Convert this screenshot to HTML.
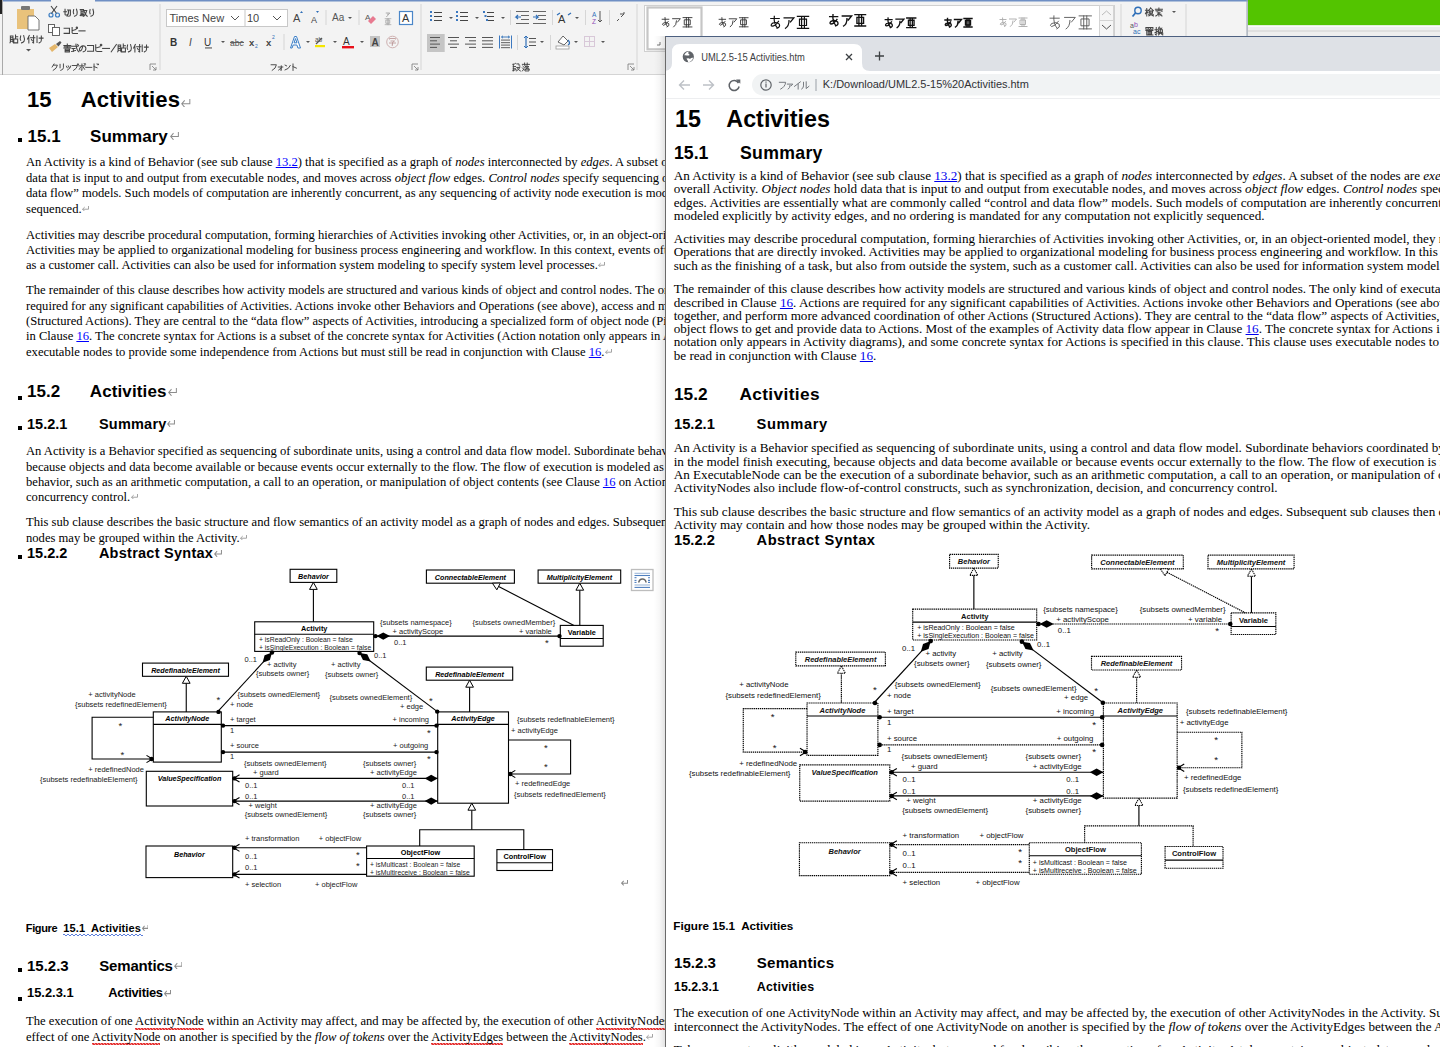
<!DOCTYPE html><html><head><meta charset="utf-8"><style>
.bx{fill:#fff;stroke:#000;stroke-width:1.1}
.ln{stroke:#000;stroke-width:1.1}
.tri{fill:#fff;stroke:#000;stroke-width:1}
.brd .bx,.brd .tri,.dl{stroke-dasharray:1.3 0.7}
.brd text{fill:#111}
.brd text{font-size-adjust:none}
.dt,.dm{fill:#000}
.ar{fill:none;stroke:#000;stroke-width:1.1}
text{font-family:"Liberation Sans",sans-serif}
.t{font-size:7.5px;fill:#222}
.at{font-size:6.8px;fill:#222}
.st{font-size:9.5px;fill:#222}
.nb{font-size:7.3px;font-weight:bold;fill:#000}
.nbi{font-size:7.2px;font-weight:bold;font-style:italic;fill:#000}

*{margin:0;padding:0;box-sizing:border-box}
html,body{width:1440px;height:1047px;overflow:hidden;background:#fff;position:relative}
body{font-family:"Liberation Sans",sans-serif;color:#000}
.a{position:absolute}
.ln{position:absolute;white-space:nowrap;font-family:"Liberation Serif",serif;line-height:1}
.hd{position:absolute;white-space:pre;font-family:"Liberation Sans",sans-serif;font-weight:bold;line-height:1}
.lk{color:#0000ee;text-decoration:underline}
.wlk{color:#0000ff;text-decoration:underline}
.pm{display:inline-block;width:7px;height:5.6px;margin-left:0.3px;vertical-align:1.5px}
.sq{position:absolute;width:4px;height:4px;background:#000}
.sp{padding-bottom:1.5px;background-image:linear-gradient(45deg,transparent 38%,#e53030 38%,#e53030 62%,transparent 62%),linear-gradient(-45deg,transparent 38%,#e53030 38%,#e53030 62%,transparent 62%);background-size:3px 2.2px;background-repeat:repeat-x;background-position:0 100%,1.5px 100%}
.wv{text-decoration:underline wavy #3060e0;text-decoration-thickness:1px;text-underline-offset:2px}
.jp{position:absolute;background:#555;opacity:.55;height:9px}
</style></head><body><div class="a" style="left:0;top:0;width:1440px;height:1047px;background:#fff"></div><div class="a" id="wdoc" style="left:3px;top:74px;width:662px;height:973px;overflow:hidden;background:#fff"><div class="hd" style="left:24.00px;top:14.79px;font-size:22.1px;letter-spacing:0.000px;">15</div><div class="hd" style="left:77.80px;top:14.79px;font-size:22.1px;letter-spacing:0.107px;">Activities</div><svg class="a" style="left:178.00px;top:24.50px" width="9.50" height="8.50" viewBox="0 0 10 8" preserveAspectRatio="none"><path d="M9.3,0 V4.5 H0.8 M3.9,1.2 L0.8,4.5 L3.9,7.8" fill="none" stroke="#8c8c8c" stroke-width="1.05"/></svg><div class="sq" style="left:15px;top:64px"></div><div class="hd" style="left:24.50px;top:53.81px;font-size:17px;letter-spacing:0.000px;">15.1</div><div class="hd" style="left:87.00px;top:53.81px;font-size:17px;letter-spacing:0.047px;">Summary</div><svg class="a" style="left:166.80px;top:58.00px" width="9.00" height="8.00" viewBox="0 0 10 8" preserveAspectRatio="none"><path d="M9.3,0 V4.5 H0.8 M3.9,1.2 L0.8,4.5 L3.9,7.8" fill="none" stroke="#8c8c8c" stroke-width="1.11"/></svg><div class="ln" style="left:23px;top:82.15px;font-size:12.6px;color:#000;">An Activity is a kind of Behavior (see sub clause <span class="wlk">13.2</span>) that is specified as a graph of <i>nodes</i> interconnected by <i>edges</i>. A subset of the nodes are executable nodes</div><div class="ln" style="left:23px;top:97.75px;font-size:12.6px;color:#000;">data that is input to and output from executable nodes, and moves across <i>object flow</i> edges. <i>Control nodes</i> specify sequencing of executable nodes</div><div class="ln" style="left:23px;top:113.35px;font-size:12.6px;color:#000;">data flow” models. Such models of computation are inherently concurrent, as any sequencing of activity node execution is modeled explicitly</div><div class="ln" style="left:23px;top:128.95px;font-size:12.6px;color:#000;">sequenced.<svg class="pm" viewBox="0 0 10 8" preserveAspectRatio="none"><path d="M9.3,0 V4.6 H0.8 M3.9,1.5 L0.8,4.6 L3.9,7.7" fill="none" stroke="#9a9a9a" stroke-width="1.3"/></svg></div><div class="ln" style="left:23px;top:154.65px;font-size:12.6px;color:#000;">Activities may describe procedural computation, forming hierarchies of Activities invoking other Activities, or, in an object-oriented model</div><div class="ln" style="left:23px;top:170.05px;font-size:12.6px;color:#000;">Activities may be applied to organizational modeling for business process engineering and workflow. In this context, events often</div><div class="ln" style="left:23px;top:184.65px;font-size:12.6px;color:#000;">as a customer call. Activities can also be used for information system modeling to specify system level processes.<svg class="pm" viewBox="0 0 10 8" preserveAspectRatio="none"><path d="M9.3,0 V4.6 H0.8 M3.9,1.5 L0.8,4.6 L3.9,7.7" fill="none" stroke="#9a9a9a" stroke-width="1.3"/></svg></div><div class="ln" style="left:23px;top:209.95px;font-size:12.6px;color:#000;">The remainder of this clause describes how activity models are structured and various kinds of object and control nodes. The only kind</div><div class="ln" style="left:23px;top:225.55px;font-size:12.6px;color:#000;">required for any significant capabilities of Activities. Actions invoke other Behaviors and Operations (see above), access and modify</div><div class="ln" style="left:23px;top:240.95px;font-size:12.6px;color:#000;">(Structured Actions). They are central to the “data flow” aspects of Activities, introducing a specialized form of object node (Pins)</div><div class="ln" style="left:23px;top:256.45px;font-size:12.6px;color:#000;">in Clause <span class="wlk">16</span>. The concrete syntax for Actions is a subset of the concrete syntax for Activities (Action notation only appears in Activity</div><div class="ln" style="left:23px;top:271.75px;font-size:12.6px;color:#000;">executable nodes to provide some independence from Actions but must still be read in conjunction with Clause <span class="wlk">16</span>.<svg class="pm" viewBox="0 0 10 8" preserveAspectRatio="none"><path d="M9.3,0 V4.6 H0.8 M3.9,1.5 L0.8,4.6 L3.9,7.7" fill="none" stroke="#9a9a9a" stroke-width="1.3"/></svg></div><div class="ln" style="left:23px;top:370.75px;font-size:12.6px;color:#000;">An Activity is a Behavior specified as sequencing of subordinate units, using a control and data flow model. Subordinate behaviors coordinated</div><div class="ln" style="left:23px;top:386.55px;font-size:12.6px;color:#000;">because objects and data become available or because events occur externally to the flow. The flow of execution is modeled as ActivityEdges</div><div class="ln" style="left:23px;top:401.75px;font-size:12.6px;color:#000;">behavior, such as an arithmetic computation, a call to an operation, or manipulation of object contents (see Clause <span class="wlk">16</span> on Actions)</div><div class="ln" style="left:23px;top:416.95px;font-size:12.6px;color:#000;">concurrency control.<svg class="pm" viewBox="0 0 10 8" preserveAspectRatio="none"><path d="M9.3,0 V4.6 H0.8 M3.9,1.5 L0.8,4.6 L3.9,7.7" fill="none" stroke="#9a9a9a" stroke-width="1.3"/></svg></div><div class="ln" style="left:23px;top:442.35px;font-size:12.6px;color:#000;">This sub clause describes the basic structure and flow semantics of an activity model as a graph of nodes and edges. Subsequent sub clauses</div><div class="ln" style="left:23px;top:457.85px;font-size:12.6px;color:#000;">nodes may be grouped within the Activity.<svg class="pm" viewBox="0 0 10 8" preserveAspectRatio="none"><path d="M9.3,0 V4.6 H0.8 M3.9,1.5 L0.8,4.6 L3.9,7.7" fill="none" stroke="#9a9a9a" stroke-width="1.3"/></svg></div><div class="ln" style="left:23px;top:941.35px;font-size:12.6px;color:#000;">The execution of one <span class="sp">ActivityNode</span> within an Activity may affect, and may be affected by, the execution of other <span class="sp">ActivityNodes</span> in</div><div class="ln" style="left:23px;top:957.15px;font-size:12.6px;color:#000;">effect of one <span class="sp">ActivityNode</span> on another is specified by the <i>flow of tokens</i> over the <span class="sp">ActivityEdges</span> between the <span class="sp">ActivityNodes</span>.<svg class="pm" viewBox="0 0 10 8" preserveAspectRatio="none"><path d="M9.3,0 V4.6 H0.8 M3.9,1.5 L0.8,4.6 L3.9,7.7" fill="none" stroke="#9a9a9a" stroke-width="1.3"/></svg></div><div class="sq" style="left:15px;top:321.5px"></div><div class="hd" style="left:24.00px;top:309.21px;font-size:17px;letter-spacing:0.000px;">15.2</div><div class="hd" style="left:86.80px;top:309.21px;font-size:17px;letter-spacing:0.115px;">Activities</div><svg class="a" style="left:164.50px;top:313.50px" width="9.00" height="8.00" viewBox="0 0 10 8" preserveAspectRatio="none"><path d="M9.3,0 V4.5 H0.8 M3.9,1.2 L0.8,4.5 L3.9,7.8" fill="none" stroke="#8c8c8c" stroke-width="1.11"/></svg><div class="sq" style="left:15px;top:352px"></div><div class="hd" style="left:24.00px;top:342.73px;font-size:14.5px;letter-spacing:0.000px;">15.2.1</div><div class="hd" style="left:95.90px;top:342.73px;font-size:14.5px;letter-spacing:0.230px;">Summary</div><svg class="a" style="left:164.00px;top:346.00px" width="8.00" height="7.00" viewBox="0 0 10 8" preserveAspectRatio="none"><path d="M9.3,0 V4.5 H0.8 M3.9,1.2 L0.8,4.5 L3.9,7.8" fill="none" stroke="#8c8c8c" stroke-width="1.25"/></svg><div class="sq" style="left:15px;top:480.5px"></div><div class="hd" style="left:24.00px;top:472.43px;font-size:14.5px;letter-spacing:0.000px;">15.2.2</div><div class="hd" style="left:95.90px;top:472.43px;font-size:14.5px;letter-spacing:0.256px;">Abstract Syntax</div><svg class="a" style="left:210.50px;top:475.50px" width="8.00" height="7.00" viewBox="0 0 10 8" preserveAspectRatio="none"><path d="M9.3,0 V4.5 H0.8 M3.9,1.2 L0.8,4.5 L3.9,7.8" fill="none" stroke="#8c8c8c" stroke-width="1.25"/></svg><div class="hd" style="left:22.80px;top:848.69px;font-size:11px;letter-spacing:-0.381px;">Figure</div><div class="hd" style="left:60.30px;top:848.69px;font-size:11px;letter-spacing:0.099px;">15.1  Activities</div><svg class="a" style="left:138.50px;top:851.00px" width="6.50" height="6.00" viewBox="0 0 10 8" preserveAspectRatio="none"><path d="M9.3,0 V4.5 H0.8 M3.9,1.2 L0.8,4.5 L3.9,7.8" fill="none" stroke="#8c8c8c" stroke-width="1.54"/></svg><svg class="a" style="left:60px;top:859px" width="80" height="4"><path d="M0,2 q1,-2 2,0 t2,0 t2,0 t2,0 t2,0 t2,0 t2,0 t2,0 t2,0 t2,0 t2,0 t2,0 t2,0 t2,0 t2,0 t2,0 t2,0 t2,0 t2,0 t2,0 t2,0 t2,0 t2,0 t2,0 t2,0 t2,0 t2,0 t2,0 t2,0 t2,0 t2,0 t2,0 t2,0 t2,0 t2,0 t2,0 t2,0 t2,0 t2,0 t2,0" fill="none" stroke="#4a6fd8" stroke-width="0.9"/></svg><div class="sq" style="left:15px;top:894px"></div><div class="hd" style="left:24.00px;top:884.10px;font-size:15px;letter-spacing:0.000px;">15.2.3</div><div class="hd" style="left:96.20px;top:884.10px;font-size:15px;letter-spacing:-0.159px;">Semantics</div><svg class="a" style="left:170.80px;top:887.50px" width="8.50" height="7.50" viewBox="0 0 10 8" preserveAspectRatio="none"><path d="M9.3,0 V4.5 H0.8 M3.9,1.2 L0.8,4.5 L3.9,7.8" fill="none" stroke="#8c8c8c" stroke-width="1.18"/></svg><div class="sq" style="left:15px;top:922.5px"></div><div class="hd" style="left:24.00px;top:912.58px;font-size:12.9px;letter-spacing:0.000px;">15.2.3.1</div><div class="hd" style="left:105.30px;top:912.58px;font-size:12.9px;letter-spacing:-0.293px;">Activities</div><svg class="a" style="left:160.50px;top:916.00px" width="7.00" height="6.50" viewBox="0 0 10 8" preserveAspectRatio="none"><path d="M9.3,0 V4.5 H0.8 M3.9,1.2 L0.8,4.5 L3.9,7.8" fill="none" stroke="#8c8c8c" stroke-width="1.43"/></svg><svg class="a" style="left:-3px;top:-74px" width="1440" height="1047"><rect class="bx" x="290.1" y="569.3" width="46.70" height="13.10"/><text class="nbi" x="313.45" y="578.90" text-anchor="middle">Behavior</text><rect class="bx" x="426.4" y="570" width="88.00" height="13.20"/><text class="nbi" x="470.40" y="579.60" text-anchor="middle">ConnectableElement</text><rect class="bx" x="538.1" y="570" width="82.60" height="13.20"/><text class="nbi" x="579.40" y="579.60" text-anchor="middle">MultiplicityElement</text><rect class="bx" x="254.7" y="621.8" width="119.00" height="29.60"/><line class="ln" x1="254.7" y1="634.3" x2="373.7" y2="634.3"/><text class="nb" x="314.20" y="631.05" text-anchor="middle">Activity</text><text class="at" x="259" y="642.0">+ isReadOnly : Boolean = false</text><text class="at" x="259" y="650.0">+ isSingleExecution : Boolean = false</text><rect class="bx" x="560.3" y="625.4" width="42.90" height="20.80"/><line class="ln" x1="560.3" y1="638.5" x2="603.2" y2="638.5"/><text class="nb" x="581.75" y="634.95" text-anchor="middle">Variable</text><rect class="bx" x="142.5" y="663.1" width="86.00" height="13.20"/><text class="nbi" x="185.50" y="672.70" text-anchor="middle">RedefinableElement</text><rect class="bx" x="426.3" y="667.1" width="86.40" height="13.10"/><text class="nbi" x="469.50" y="676.70" text-anchor="middle">RedefinableElement</text><rect class="bx" x="153.3" y="711.9" width="68.00" height="50.20"/><line class="ln" x1="153.3" y1="724.4" x2="221.3" y2="724.4"/><text class="nbi" x="187.30" y="721.15" text-anchor="middle">ActivityNode</text><rect class="bx" x="437.7" y="711.9" width="70.80" height="91.30"/><line class="ln" x1="437.7" y1="724.4" x2="508.5" y2="724.4"/><text class="nbi" x="473.10" y="721.15" text-anchor="middle">ActivityEdge</text><rect class="bx" x="146.3" y="771.3" width="86.40" height="34.70"/><text class="nbi" x="189.50" y="781.20" text-anchor="middle">ValueSpecification</text><rect class="bx" x="146" y="846" width="86.70" height="31.60"/><text class="nbi" x="189.35" y="856.80" text-anchor="middle">Behavior</text><rect class="bx" x="366.6" y="846" width="107.60" height="30.20"/><line class="ln" x1="366.6" y1="858.5" x2="474.2" y2="858.5"/><text class="nb" x="420.40" y="855.25" text-anchor="middle">ObjectFlow</text><text class="at" x="370" y="867.2">+ isMulticast : Boolean = false</text><text class="at" x="370" y="875.2">+ isMultireceive : Boolean = false</text><rect class="bx" x="496.9" y="849.6" width="55.60" height="20.90"/><line class="ln" x1="496.9" y1="862.7" x2="552.5" y2="862.7"/><text class="nb" x="524.70" y="859.15" text-anchor="middle">ControlFlow</text><line class="ln" x1="313.40" y1="589.40" x2="313.40" y2="621.80"/><polygon class="tri" points="313.40,582.40 309.55,589.40 317.25,589.40"/><line class="ln" x1="498.62" y1="586.42" x2="574.00" y2="625.40"/><polygon class="tri" points="492.40,583.20 496.85,589.84 500.39,583.00"/><line class="ln" x1="579.80" y1="590.20" x2="579.80" y2="625.40"/><polygon class="tri" points="579.80,583.20 575.95,590.20 583.65,590.20"/><line class="ln" x1="186.25" y1="683.30" x2="186.25" y2="711.90"/><polygon class="tri" points="186.25,676.30 182.40,683.30 190.10,683.30"/><line class="ln" x1="469.60" y1="687.20" x2="469.60" y2="711.90"/><polygon class="tri" points="469.60,680.20 465.75,687.20 473.45,687.20"/><line class="ln" x1="471.80" y1="810.20" x2="471.80" y2="829.80"/><polygon class="tri" points="471.80,803.20 467.95,810.20 475.65,810.20"/><polyline class="ar" points="419.7,846 419.7,829.8 523.8,829.8 523.8,849.6"/><line class="ln" x1="375.50" y1="636.10" x2="560.30" y2="636.10"/><polygon class="dm" points="376.50,636.10 383.25,639.70 390.00,636.10 383.25,632.50"/><circle cx="375.50" cy="636.10" r="2.2" class="dt"/><circle cx="559.50" cy="636.10" r="2.2" class="dt"/><line class="ln" x1="272.00" y1="652.50" x2="217.50" y2="711.90"/><polygon class="dm" points="272.00,652.50 264.61,655.22 262.54,662.82 269.92,660.09"/><circle cx="272.00" cy="652.50" r="2.2" class="dt"/><circle cx="218.50" cy="711.90" r="2.2" class="dt"/><line class="ln" x1="359.50" y1="653.00" x2="437.70" y2="711.90"/><polygon class="dm" points="359.50,653.00 362.93,660.09 370.68,661.42 367.26,654.34"/><circle cx="359.50" cy="653.00" r="2.2" class="dt"/><circle cx="437.20" cy="711.60" r="2.2" class="dt"/><line class="ln" x1="221.30" y1="725.60" x2="437.70" y2="725.60"/><circle cx="223.00" cy="725.60" r="2.2" class="dt"/><circle cx="436.50" cy="725.60" r="2.2" class="dt"/><line class="ln" x1="221.30" y1="752.10" x2="437.70" y2="752.10"/><circle cx="223.00" cy="752.10" r="2.2" class="dt"/><circle cx="436.50" cy="752.10" r="2.2" class="dt"/><line class="ln" x1="232.70" y1="778.40" x2="437.70" y2="778.40"/><polyline class="ar" points="239.50,782.00 233.50,778.40 239.50,774.80"/><circle cx="234.50" cy="778.40" r="2.2" class="dt"/><polygon class="dm" points="437.70,778.40 431.20,774.80 424.70,778.40 431.20,782.00"/><line class="ln" x1="232.70" y1="801.10" x2="437.70" y2="801.10"/><polyline class="ar" points="239.50,804.70 233.50,801.10 239.50,797.50"/><circle cx="234.50" cy="801.10" r="2.2" class="dt"/><polygon class="dm" points="437.70,801.10 431.20,797.50 424.70,801.10 431.20,804.70"/><line class="ln" x1="232.70" y1="847.80" x2="366.60" y2="847.80"/><polyline class="ar" points="239.50,851.40 233.50,847.80 239.50,844.20"/><circle cx="234.50" cy="847.80" r="2.2" class="dt"/><line class="ln" x1="232.70" y1="874.40" x2="366.60" y2="874.40"/><polyline class="ar" points="239.50,878.00 233.50,874.40 239.50,870.80"/><circle cx="234.50" cy="874.40" r="2.2" class="dt"/><polyline class="ar" points="153.3,717.3 92.1,717.3 92.1,759 153.3,759"/><polyline class="ar" points="146.50,755.40 152.50,759.00 146.50,762.60"/><circle cx="151.50" cy="759.00" r="2.2" class="dt"/><polyline class="ar" points="508.5,740 570.6,740 570.6,774 508.5,774"/><polyline class="ar" points="515.30,777.60 509.30,774.00 515.30,770.40"/><circle cx="510.30" cy="774.00" r="2.2" class="dt"/><text class="t" x="380" y="625">{subsets namespace}</text><text class="t" x="392.5" y="634">+ activityScope</text><text class="t" x="394" y="645">0..1</text><text class="t" x="472.6" y="625">{subsets ownedMember}</text><text class="t" x="519" y="634">+ variable</text><text class="st" x="545.0" y="645.5">*</text><text class="t" x="244.5" y="662">0..1</text><text class="t" x="267" y="667">+ activity</text><text class="t" x="256" y="676">{subsets owner}</text><text class="t" x="374" y="658">0..1</text><text class="t" x="331" y="667">+ activity</text><text class="t" x="325" y="677">{subsets owner}</text><text class="t" x="88.3" y="697">+ activityNode</text><text class="t" x="75" y="707">{subsets redefinedElement}</text><text class="st" x="216.5" y="702.5">*</text><text class="t" x="237.5" y="697">{subsets ownedElement}</text><text class="t" x="230" y="707">+ node</text><text class="t" x="329.6" y="700">{subsets ownedElement}</text><text class="st" x="429.0" y="703.5">*</text><text class="t" x="400" y="709">+ edge</text><text class="t" x="230" y="722">+ target</text><text class="t" x="230" y="733">1</text><text class="t" x="392.5" y="722">+ incoming</text><text class="st" x="427.0" y="735.5">*</text><text class="t" x="517" y="722">{subsets redefinableElement}</text><text class="t" x="511" y="733">+ activityEdge</text><text class="st" x="118.5" y="728.5">*</text><text class="st" x="120.5" y="757.5">*</text><text class="t" x="230" y="748">+ source</text><text class="t" x="230" y="759">1</text><text class="t" x="393" y="748">+ outgoing</text><text class="st" x="427.0" y="761.5">*</text><text class="st" x="544.0" y="750.5">*</text><text class="st" x="544.0" y="769.5">*</text><text class="t" x="244" y="766">{subsets ownedElement}</text><text class="t" x="253" y="775">+ guard</text><text class="t" x="363" y="766">{subsets owner}</text><text class="t" x="370" y="775">+ activityEdge</text><text class="t" x="88.3" y="772">+ redefinedNode</text><text class="t" x="40" y="782">{subsets redefinableElement}</text><text class="t" x="245" y="788">0..1</text><text class="t" x="402" y="788">0..1</text><text class="t" x="245" y="799">0..1</text><text class="t" x="402" y="799">0..1</text><text class="t" x="515" y="786">+ redefinedEdge</text><text class="t" x="514" y="797">{subsets redefinedElement}</text><text class="t" x="248.6" y="808">+ weight</text><text class="t" x="370" y="808">+ activityEdge</text><text class="t" x="244.7" y="817">{subsets ownedElement}</text><text class="t" x="363" y="817">{subsets owner}</text><text class="t" x="245" y="841">+ transformation</text><text class="t" x="318.8" y="841">+ objectFlow</text><text class="t" x="245" y="859">0..1</text><text class="st" x="356.0" y="857.5">*</text><text class="t" x="245" y="870">0..1</text><text class="st" x="356.0" y="868.5">*</text><text class="t" x="245" y="887">+ selection</text><text class="t" x="315" y="887">+ objectFlow</text></svg><svg class="a" style="left:-3px;top:-74px" width="700" height="1047"><rect x="631.5" y="569.5" width="21.5" height="21" fill="#fff" stroke="#bdbdbd" stroke-width="1.3"/><g stroke="#4f7fbf" stroke-width="1.1"><line x1="634.5" y1="573.3" x2="650" y2="573.3" stroke="#9fb8d8"/><line x1="634.5" y1="575.5" x2="650" y2="575.5"/><line x1="634.5" y1="577.7" x2="636.5" y2="577.7"/><line x1="648" y1="577.7" x2="650" y2="577.7"/><line x1="634.5" y1="580.4" x2="636.5" y2="580.4"/><line x1="648" y1="580.4" x2="650" y2="580.4"/><line x1="634.5" y1="582.4" x2="636.5" y2="582.4"/><line x1="648" y1="582.4" x2="650" y2="582.4"/><line x1="634.5" y1="585" x2="650" y2="585" stroke="#9fb8d8"/><line x1="634.5" y1="587.4" x2="650" y2="587.4"/></g><path d="M638.8,582.6 a3.6,3.6 0 0 1 7.2,0" fill="none" stroke="#666" stroke-width="1.6"/></svg><svg class="a" style="left:617.50px;top:806.00px" width="7.00" height="5.60" viewBox="0 0 10 8" preserveAspectRatio="none"><path d="M9.3,0 V4.5 H0.8 M3.9,1.2 L0.8,4.5 L3.9,7.8" fill="none" stroke="#8c8c8c" stroke-width="1.43"/></svg></div><svg class="a" style="left:0;top:0" width="1440" height="75"><rect x="0" y="0" width="1248" height="74" fill="#f3f3f3"/><rect x="0" y="74" width="1248" height="1" fill="#d4d4d4"/><rect x="3" y="0" width="48" height="1.5" fill="#6f8fc4"/><rect x="95" y="0" width="1153" height="1.5" fill="#6f8fc4"/><rect x="0" y="0" width="2" height="14" fill="#222"/><rect x="2" y="0" width="1" height="1047" fill="#a9a9a9"/><rect x="1246.5" y="0" width="1.2" height="36" fill="#9aa4b0"/><rect x="159.5" y="4" width="1" height="66" fill="#d6d6d6"/><rect x="420.5" y="4" width="1" height="66" fill="#d6d6d6"/><rect x="636.5" y="4" width="1" height="66" fill="#d6d6d6"/><rect x="1185.5" y="4" width="1" height="66" fill="#d6d6d6"/><rect x="17" y="9" width="17" height="20" fill="#e9c27b"/><rect x="21" y="6" width="9" height="4" rx="1" fill="#777"/><path d="M28,16 h7 l4,4 v10 h-11 z" fill="#fff" stroke="#666" stroke-width="0.9"/><g fill="none" stroke="#444" stroke-width="1.22" stroke-linecap="square" stroke-linejoin="miter"><path transform="translate(9.50,34.70) scale(0.860)" d="M1,1.5 H4 V7.5 H1 Z M1,3.5 H4 M1,5.5 H4 M1.5,7.5 L0.5,9.5 M3.5,7.5 L4.5,9.5 M7,0.5 V5 M7,2.5 H9.5 M5,5 H9.5 V9.5 H5 Z"/><path transform="translate(18.10,34.70) scale(0.860)" d="M3,1.5 Q2,5 3,6.5 M6.5,1 Q8,5 7,7.5 Q6,9 4,9.5"/><path transform="translate(26.70,34.70) scale(0.860)" d="M3,1 L1,5 M2.5,3.5 V9.5 M4.5,3.5 H9.5 M8,1 V9.5 L7,9 M5.5,5.5 L6.5,7"/><path transform="translate(35.30,34.70) scale(0.860)" d="M2,1.5 V9 M4.5,4 H9 M7,1.5 V6.5 Q7,9 4.5,9.5"/></g><path d="M26,49 h5 l-2.5,2.5z" fill="#555"/><g stroke="#444" stroke-width="1.1" fill="none"><line x1="51" y1="6" x2="57" y2="14"/><line x1="57" y1="6" x2="51" y2="14"/></g><g stroke="#3d7ec2" stroke-width="1.2" fill="none"><circle cx="51" cy="15" r="2"/><circle cx="57.5" cy="15" r="2"/></g><g fill="none" stroke="#444" stroke-width="1.34" stroke-linecap="square" stroke-linejoin="miter"><path transform="translate(63.00,8.40) scale(0.820)" d="M1,4 H4.5 M2.5,1 V7 Q2.5,8.5 4.5,8 M5.5,2 H9 V8 Q9,9.5 7,9.5 M7,2 Q7,7 5,9.5"/><path transform="translate(71.20,8.40) scale(0.820)" d="M3,1.5 Q2,5 3,6.5 M6.5,1 Q8,5 7,7.5 Q6,9 4,9.5"/><path transform="translate(79.40,8.40) scale(0.820)" d="M1,1.5 H5 M2,1.5 V9 M4.5,1.5 V9.5 M2,4 H4.5 M2,6.5 H4.5 M1,8.5 L5,7.5 M5.5,2.5 H9 Q8,7 5.5,9.5 M6,4 Q7,8 9.5,9.5"/><path transform="translate(87.60,8.40) scale(0.820)" d="M3,1.5 Q2,5 3,6.5 M6.5,1 Q8,5 7,7.5 Q6,9 4,9.5"/></g><g stroke="#555" stroke-width="0.9" fill="#fff"><rect x="48.5" y="24.5" width="6" height="8"/><rect x="52.5" y="27.5" width="7" height="8"/></g><g fill="none" stroke="#444" stroke-width="1.45" stroke-linecap="square" stroke-linejoin="miter"><path transform="translate(63.00,26.70) scale(0.760)" d="M1.5,2 H8.5 V8.8 H1.5"/><path transform="translate(70.60,26.70) scale(0.760)" d="M2,1.2 V8 Q2,9 4,9 H9 M2,5.2 L7,3.6 M8.2,0.6 a0.9,0.9 0 1 0 0.01,0"/><path transform="translate(78.20,26.70) scale(0.760)" d="M1,5.5 H9"/></g><path d="M49,48 l6,-4 l3,3 l-6,5 z" fill="#e4b66a"/><path d="M56,44 l4,-3 l1.5,1.5 l-3,4z" fill="#555"/><g fill="none" stroke="#444" stroke-width="1.22" stroke-linecap="square" stroke-linejoin="miter"><path transform="translate(63.00,43.70) scale(0.860)" d="M1,2 H9 M1.5,3.5 H8.5 M1,5 H9 M5,0.5 V5 M2.5,6.5 H7.5 V9.5 H2.5 Z M2.5,8 H7.5"/><path transform="translate(70.75,43.70) scale(0.860)" d="M1,3 H8.5 M1.5,5.5 H5 M3,5.5 V9 M1,9 L5.5,8 M6,0.5 Q6.5,7 9.5,9.5 M8,1 L9,2"/><path transform="translate(78.50,43.70) scale(0.860)" d="M5,2.5 Q4,8 2,8.5 Q0.5,8 1.5,5 Q4,1.5 7.5,3 Q9.5,5 8,8 Q7,9 5.5,9.5"/><path transform="translate(86.25,43.70) scale(0.860)" d="M1.5,2 H8.5 V8.8 H1.5"/><path transform="translate(94.00,43.70) scale(0.860)" d="M2,1.2 V8 Q2,9 4,9 H9 M2,5.2 L7,3.6 M8.2,0.6 a0.9,0.9 0 1 0 0.01,0"/><path transform="translate(101.75,43.70) scale(0.860)" d="M1,5.5 H9"/><path transform="translate(109.50,43.70) scale(0.860)" d="M8,1 L2,9.5"/><path transform="translate(117.25,43.70) scale(0.860)" d="M1,1.5 H4 V7.5 H1 Z M1,3.5 H4 M1,5.5 H4 M1.5,7.5 L0.5,9.5 M3.5,7.5 L4.5,9.5 M7,0.5 V5 M7,2.5 H9.5 M5,5 H9.5 V9.5 H5 Z"/><path transform="translate(125.00,43.70) scale(0.860)" d="M3,1.5 Q2,5 3,6.5 M6.5,1 Q8,5 7,7.5 Q6,9 4,9.5"/><path transform="translate(132.75,43.70) scale(0.860)" d="M3,1 L1,5 M2.5,3.5 V9.5 M4.5,3.5 H9.5 M8,1 V9.5 L7,9 M5.5,5.5 L6.5,7"/><path transform="translate(140.50,43.70) scale(0.860)" d="M2,1.5 V9 M4.5,4 H9 M7,1.5 V6.5 Q7,9 4.5,9.5"/></g><g fill="none" stroke="#444" stroke-width="1.27" stroke-linecap="square" stroke-linejoin="miter"><path transform="translate(51.00,63.25) scale(0.750)" d="M4,1 L1.5,5 M3.5,2.5 H8.5 Q8,7 3,9.5"/><path transform="translate(57.80,63.25) scale(0.750)" d="M3,1.5 V6 M7.5,1 V6 Q7.5,8.5 4,9.5"/><path transform="translate(64.60,63.25) scale(0.750)" d="M2.5,4 L3.5,6 M5,3.5 L6,5.5 M8.5,3.5 Q8,7 4,9"/><path transform="translate(71.40,63.25) scale(0.750)" d="M1.5,3 H8 Q7.5,7 3,9.5 M8.7,1 a0.9,0.9 0 1 0 0.01,0"/><path transform="translate(78.20,63.25) scale(0.750)" d="M1,3.5 H9 M5,1 V9.5 L4,9 M3,5.5 L1.5,8 M7,5.5 L8.5,8 M8,0.5 L8.5,1.5 M9.2,0.3 L9.7,1.3"/><path transform="translate(85.00,63.25) scale(0.750)" d="M1,5.5 H9"/><path transform="translate(91.80,63.25) scale(0.750)" d="M3,1 V9.5 M3,4.5 L7,6 M7,1 L7.5,2 M8.5,0.8 L9,1.8"/></g><g stroke="#777" stroke-width="0.8" fill="none"><path d="M150,70 v-6 h6"/><path d="M152,66 l4,4 m0,-3 v3 h-3"/></g><rect x="166.5" y="9.5" width="121" height="17" fill="#fff" stroke="#c8c8c8"/><rect x="244.5" y="9.5" width="1" height="17" fill="#c8c8c8"/><text x="169.5" y="22" font-size="11" fill="#444" font-family="Liberation Sans">Times New I</text><rect x="226" y="10" width="8" height="16" fill="#fff"/><text x="247" y="22" font-size="11" fill="#444" font-family="Liberation Sans">10</text><path d="M231,16 l4,4 l4,-4" stroke="#555" stroke-width="1" fill="none"/><path d="M273,16 l4,4 l4,-4" stroke="#555" stroke-width="1" fill="none"/><text x="293" y="22" font-size="11" fill="#444" font-family="Liberation Sans">A</text><path d="M300,13 l1.5,-2 l1.5,2z" fill="#2f6fb8"/><text x="311" y="23" font-size="9" fill="#444" font-family="Liberation Sans">A</text><path d="M316,11 l1.5,2 l1.5,-2z" fill="#2f6fb8"/><rect x="325.5" y="10" width="1" height="15" fill="#d6d6d6"/><text x="332" y="21" font-size="10" fill="#555" font-family="Liberation Sans">Aa</text><path d="M348,17 h4 l-2,2z" fill="#555"/><rect x="358.5" y="10" width="1" height="15" fill="#d6d6d6"/><text x="365" y="20" font-size="8" fill="#555" font-family="Liberation Sans">A</text><path d="M368,21 l5,-5 l3,3 l-5,5z" fill="#e87a90"/><g fill="none" stroke="#999" stroke-width="1.60" stroke-linecap="square" stroke-linejoin="miter"><path transform="translate(385.50,12.00) scale(0.500)" d="M1.5,2 H8.5 L6,5 M5,4 Q5,8 2.5,9.5"/></g><g fill="none" stroke="#aaa" stroke-width="1.14" stroke-linecap="square" stroke-linejoin="miter"><path transform="translate(384.50,18.00) scale(0.700)" d="M1,1 H9 M1,9.5 H9 M2.5,3 H7.5 V7.5 H2.5 Z M4,1 V9.5 M6,1 V9.5"/></g><rect x="399.5" y="11.5" width="13" height="13" fill="#fff" stroke="#4a86c8" stroke-width="1.2"/><text x="402" y="22" font-size="11" fill="#333" font-family="Liberation Sans">A</text><text x="170" y="46" font-size="10" font-weight="bold" fill="#333" font-family="Liberation Sans">B</text><text x="189" y="46" font-size="10" font-style="italic" fill="#444" font-family="Liberation Serif">I</text><text x="204" y="46" font-size="10" fill="#333" font-family="Liberation Sans">U</text><rect x="205" y="47.5" width="7" height="0.9" fill="#333"/><path d="M221,41 h4 l-2,2z" fill="#555"/><text x="230" y="46" font-size="8.5" fill="#555" font-family="Liberation Sans">abc</text><rect x="230" y="42" width="14" height="0.9" fill="#555"/><text x="249" y="46" font-size="9.5" font-weight="bold" fill="#444" font-family="Liberation Sans">x</text><text x="255" y="48" font-size="5" fill="#2f6fb8" font-family="Liberation Sans">2</text><text x="266" y="46" font-size="9.5" font-weight="bold" fill="#444" font-family="Liberation Sans">x</text><text x="272" y="39" font-size="5" fill="#2f6fb8" font-family="Liberation Sans">2</text><rect x="283.5" y="34" width="1" height="16" fill="#d6d6d6"/><path d="M290.5,48 L294.5,36.5 h2 L300.5,48 h-2.6 l-1,-3 h-3.8 l-1,3 z M294,42.8 h3 l-1.5,-4.2 z" fill="#fff" stroke="#3b7fc8" stroke-width="1" stroke-linejoin="round"/><path d="M306,41 h4 l-2,2z" fill="#555"/><text x="315" y="42" font-size="6.5" fill="#555" font-family="Liberation Sans">ab</text><path d="M316,44 l6,-6" stroke="#555" stroke-width="1.3"/><rect x="315" y="45" width="10" height="2.2" fill="#f4e600"/><path d="M333,41 h4 l-2,2z" fill="#555"/><text x="343" y="45" font-size="10" fill="#333" font-family="Liberation Sans">A</text><rect x="342" y="46" width="12" height="2.4" fill="#e8101a"/><path d="M360,41 h4 l-2,2z" fill="#555"/><rect x="370" y="36" width="10" height="11" fill="#c4c4c4"/><text x="371.5" y="46" font-size="10" font-weight="bold" fill="#444" font-family="Liberation Sans">A</text><circle cx="392.5" cy="42" r="5.8" fill="none" stroke="#c9a9a9" stroke-width="0.9"/><path d="M389.5,39.5 v-1 h6 v1 M390.5,41 h4 l-2,1.5 v3 l-1,-0.5 M389,43 h7" stroke="#b89090" stroke-width="0.8" fill="none"/><g fill="none" stroke="#444" stroke-width="1.27" stroke-linecap="square" stroke-linejoin="miter"><path transform="translate(270.00,63.25) scale(0.750)" d="M1.5,2 H8.5 Q8,7 3,9.5"/><path transform="translate(276.80,63.25) scale(0.750)" d="M2,5 H8 M6,3.5 V9.5 L5,9 M6,6 L2.5,9"/><path transform="translate(283.60,63.25) scale(0.750)" d="M2,2.5 L4,3.5 M2,9 Q7,8 9,3"/><path transform="translate(290.40,63.25) scale(0.750)" d="M3.5,1 V9.5 M3.5,4.5 L8,6.5"/></g><g stroke="#777" stroke-width="0.8" fill="none"><path d="M412,70 v-6 h6"/><path d="M414,66 l4,4 m0,-3 v3 h-3"/></g><rect x="434" y="12" width="8" height="1" fill="#444"/><rect x="434" y="16" width="8" height="1" fill="#444"/><rect x="434" y="20" width="8" height="1" fill="#444"/><rect x="430" y="11" width="2" height="2" fill="#3b78c0"/><rect x="430" y="15" width="2" height="2" fill="#3b78c0"/><rect x="430" y="19" width="2" height="2" fill="#3b78c0"/><rect x="460" y="12" width="8" height="1" fill="#444"/><rect x="460" y="16" width="8" height="1" fill="#444"/><rect x="460" y="20" width="8" height="1" fill="#444"/><rect x="456" y="11" width="2" height="2" fill="#3b78c0"/><rect x="456" y="15" width="2" height="2" fill="#3b78c0"/><rect x="456" y="19" width="2" height="2" fill="#3b78c0"/><rect x="487" y="12" width="7" height="1" fill="#444"/><rect x="487" y="16" width="7" height="1" fill="#444"/><rect x="487" y="20" width="7" height="1" fill="#444"/><rect x="483.0" y="11" width="2" height="2" fill="#3b78c0"/><rect x="484.5" y="15" width="2" height="2" fill="#3b78c0"/><rect x="486.0" y="19" width="2" height="2" fill="#3b78c0"/><path d="M449,17 h4 l-2,2z" fill="#555"/><path d="M475,17 h4 l-2,2z" fill="#555"/><path d="M501,17 h4 l-2,2z" fill="#555"/><rect x="510" y="10" width="1" height="15" fill="#d6d6d6"/><rect x="516" y="11" width="13" height="1" fill="#666"/><rect x="521" y="15" width="8" height="1" fill="#666"/><rect x="521" y="19" width="8" height="1" fill="#666"/><rect x="516" y="23" width="13" height="1" fill="#666"/><rect x="533" y="11" width="13" height="1" fill="#666"/><rect x="538" y="15" width="8" height="1" fill="#666"/><rect x="538" y="19" width="8" height="1" fill="#666"/><rect x="533" y="23" width="13" height="1" fill="#666"/><path d="M521,17 h-5 l2,-2 m-2,2 l2,2" stroke="#2f6fb8" stroke-width="1.2" fill="none"/><path d="M533,17 h5 l-2,-2 m2,2 l-2,2" stroke="#2f6fb8" stroke-width="1.2" fill="none"/><rect x="552" y="10" width="1" height="15" fill="#d6d6d6"/><text x="558" y="23" font-size="11" fill="#333" font-family="Liberation Sans">A</text><path d="M557,15 l3,-2 m8,2 l3,-2" stroke="#2f6fb8" stroke-width="1.3"/><path d="M575,17 h4 l-2,2z" fill="#555"/><rect x="585" y="10" width="1" height="15" fill="#d6d6d6"/><text x="592" y="17" font-size="6.5" fill="#2f6fb8" font-family="Liberation Sans">A</text><text x="592" y="24" font-size="6.5" fill="#8e4bb6" font-family="Liberation Sans">Z</text><path d="M600,11 v11 l-2,-2 m2,2 l2,-2" stroke="#555" stroke-width="1" fill="none"/><rect x="609" y="10" width="1" height="15" fill="#d6d6d6"/><path d="M620,14 h4 v-2 m0,2 l-3,3 M619,19 l-2,2" stroke="#555" stroke-width="1" fill="none"/><rect x="427" y="34" width="17.7" height="18" fill="#c5c5c5"/><g fill="#555"><rect x="430" y="37.0" width="10" height="1"/><rect x="430" y="40.3" width="7" height="1"/><rect x="430" y="43.6" width="10" height="1"/><rect x="430" y="46.9" width="7" height="1"/><rect x="448.0" y="37.0" width="11" height="1"/><rect x="450.0" y="40.3" width="7" height="1"/><rect x="448.0" y="43.6" width="11" height="1"/><rect x="450.0" y="46.9" width="7" height="1"/><rect x="465.0" y="37.0" width="11" height="1"/><rect x="469.0" y="40.3" width="7" height="1"/><rect x="465.0" y="43.6" width="11" height="1"/><rect x="469.0" y="46.9" width="7" height="1"/><rect x="482" y="37.0" width="11" height="1"/><rect x="482" y="40.3" width="11" height="1"/><rect x="482" y="43.6" width="11" height="1"/><rect x="482" y="46.9" width="11" height="1"/></g><path d="M499.5,35.5 v13 M511.5,35.5 v13" stroke="#3b78c0" stroke-width="1"/><path d="M501.5,37 h8 M501.5,37 l1.5,-1.2 M501.5,37 l1.5,1.2 M509.5,37 l-1.5,-1.2 M509.5,37 l-1.5,1.2" stroke="#2f6fb8" stroke-width="0.9" fill="none"/><g fill="#777"><rect x="501" y="39.5" width="9" height="1.2"/><rect x="501" y="42" width="9" height="1.2"/><rect x="501" y="44.5" width="9" height="1.2"/><rect x="501" y="47" width="9" height="1.2"/></g><rect x="517" y="35" width="1" height="15" fill="#d6d6d6"/><path d="M526,37 v10" stroke="#2f6fb8" stroke-width="1.2"/><path d="M524,38 l2,-2 l2,2 M524,46 l2,2 l2,-2" stroke="#2f6fb8" stroke-width="1" fill="none"/><rect x="529" y="38.0" width="7" height="1" fill="#555"/><rect x="529" y="41.5" width="7" height="1" fill="#555"/><rect x="529" y="45.0" width="7" height="1" fill="#555"/><path d="M540,41 h4 l-2,2z" fill="#555"/><rect x="550" y="35" width="1" height="15" fill="#d6d6d6"/><path d="M558,42 l5,-6 l5,5 l-4,4z" fill="#fff" stroke="#555" stroke-width="0.9"/><path d="M568,40 c2,2 2,4 0,5" stroke="#2f6fb8" stroke-width="1.3" fill="none"/><rect x="556" y="46" width="13" height="3" fill="#fff" stroke="#999" stroke-width="0.8"/><path d="M574,41 h4 l-2,2z" fill="#555"/><g stroke="#d8c8d8" stroke-width="1" fill="none"><rect x="584.5" y="36.5" width="10" height="10"/><line x1="589.5" y1="36.5" x2="589.5" y2="46.5"/><line x1="584.5" y1="41.5" x2="594.5" y2="41.5"/></g><path d="M601,41 h4 l-2,2z" fill="#555"/><g fill="none" stroke="#444" stroke-width="1.08" stroke-linecap="square" stroke-linejoin="miter"><path transform="translate(512.00,62.60) scale(0.880)" d="M1,2 Q3,2 4,1 M1.5,2 V9.5 M1.5,4.5 H4 M1.5,7 H4 M1,9 L4.5,8 M5.5,1.5 H8 V3.5 Q8,4 9,4 M5.5,5.5 H9 Q8,8 5,9.5 M6,6 Q7,8.5 9.5,9.5"/><path transform="translate(521.50,62.60) scale(0.880)" d="M1,2 H9 M3.5,0.5 V3 M6.5,0.5 V3 M1.5,4 L2.5,5 M1,6 L2,7 M1,9.5 L2.5,7.5 M5,3.5 L3.5,6 M4.5,4.5 H8.5 L4,8 M5,5.5 L9,7.5 M4.5,7.5 H8.5 V9.5 H4.5 Z"/></g><g stroke="#777" stroke-width="0.8" fill="none"><path d="M628,70 v-6 h6"/><path d="M630,66 l4,4 m0,-3 v3 h-3"/></g><rect x="644.5" y="5.5" width="470" height="46" fill="#fff" stroke="#d0d0d0"/><rect x="1120.5" y="4" width="1" height="66" fill="#d6d6d6"/><rect x="647.5" y="7.5" width="54" height="41.8" fill="none" stroke="#c6c6c6" stroke-width="2.2"/><path d="M660,42 v3 h-3" stroke="#555" stroke-width="0.8" fill="none"/><g fill="none" stroke="#333" stroke-width="0.82" stroke-linecap="square" stroke-linejoin="miter"><path transform="translate(660.00,16.50) scale(1.100)" d="M2,2.5 H8 M4.5,1 Q4,6 6.5,9 M7.5,4.5 Q5,8 3,8 Q1.5,7.5 3,6 Q6,4.5 8,6.5 Q9,8.5 6.5,9.5"/><path transform="translate(671.00,16.50) scale(1.100)" d="M1.5,2 H8.5 L6,5 M5,4 Q5,8 2.5,9.5"/><path transform="translate(682.00,16.50) scale(1.100)" d="M1,1 H9 M1,9.5 H9 M2.5,3 H7.5 V7.5 H2.5 Z M4,1 V9.5 M6,1 V9.5"/></g><g fill="none" stroke="#333" stroke-width="0.84" stroke-linecap="square" stroke-linejoin="miter"><path transform="translate(717.00,16.65) scale(1.070)" d="M2,2.5 H8 M4.5,1 Q4,6 6.5,9 M7.5,4.5 Q5,8 3,8 Q1.5,7.5 3,6 Q6,4.5 8,6.5 Q9,8.5 6.5,9.5"/><path transform="translate(727.70,16.65) scale(1.070)" d="M1.5,2 H8.5 L6,5 M5,4 Q5,8 2.5,9.5"/><path transform="translate(738.40,16.65) scale(1.070)" d="M1,1 H9 M1,9.5 H9 M2.5,3 H7.5 V7.5 H2.5 Z M4,1 V9.5 M6,1 V9.5"/></g><g fill="none" stroke="#111" stroke-width="0.86" stroke-linecap="square" stroke-linejoin="miter"><path transform="translate(768.00,15.00) scale(1.400)" d="M2,2.5 H8 M4.5,1 Q4,6 6.5,9 M7.5,4.5 Q5,8 3,8 Q1.5,7.5 3,6 Q6,4.5 8,6.5 Q9,8.5 6.5,9.5"/><path transform="translate(782.00,15.00) scale(1.400)" d="M1.5,2 H8.5 L6,5 M5,4 Q5,8 2.5,9.5"/><path transform="translate(796.00,15.00) scale(1.400)" d="M1,1 H9 M1,9.5 H9 M2.5,3 H7.5 V7.5 H2.5 Z M4,1 V9.5 M6,1 V9.5"/></g><g fill="none" stroke="#111" stroke-width="1.02" stroke-linecap="square" stroke-linejoin="miter"><path transform="translate(827.00,13.35) scale(1.330)" d="M2,2.5 H8 M4.5,1 Q4,6 6.5,9 M7.5,4.5 Q5,8 3,8 Q1.5,7.5 3,6 Q6,4.5 8,6.5 Q9,8.5 6.5,9.5"/><path transform="translate(840.30,13.35) scale(1.330)" d="M1.5,2 H8.5 L6,5 M5,4 Q5,8 2.5,9.5"/><path transform="translate(853.60,13.35) scale(1.330)" d="M1,1 H9 M1,9.5 H9 M2.5,3 H7.5 V7.5 H2.5 Z M4,1 V9.5 M6,1 V9.5"/></g><g fill="none" stroke="#111" stroke-width="1.15" stroke-linecap="square" stroke-linejoin="miter"><path transform="translate(883.00,16.85) scale(1.130)" d="M2,2.5 H8 M4.5,1 Q4,6 6.5,9 M7.5,4.5 Q5,8 3,8 Q1.5,7.5 3,6 Q6,4.5 8,6.5 Q9,8.5 6.5,9.5"/><path transform="translate(894.30,16.85) scale(1.130)" d="M1.5,2 H8.5 L6,5 M5,4 Q5,8 2.5,9.5"/><path transform="translate(905.60,16.85) scale(1.130)" d="M1,1 H9 M1,9.5 H9 M2.5,3 H7.5 V7.5 H2.5 Z M4,1 V9.5 M6,1 V9.5"/></g><g fill="none" stroke="#111" stroke-width="1.40" stroke-linecap="square" stroke-linejoin="miter"><path transform="translate(943.00,17.50) scale(1.000)" d="M2,2.5 H8 M4.5,1 Q4,6 6.5,9 M7.5,4.5 Q5,8 3,8 Q1.5,7.5 3,6 Q6,4.5 8,6.5 Q9,8.5 6.5,9.5"/><path transform="translate(953.00,17.50) scale(1.000)" d="M1.5,2 H8.5 L6,5 M5,4 Q5,8 2.5,9.5"/><path transform="translate(963.00,17.50) scale(1.000)" d="M1,1 H9 M1,9.5 H9 M2.5,3 H7.5 V7.5 H2.5 Z M4,1 V9.5 M6,1 V9.5"/></g><g fill="none" stroke="#aaa" stroke-width="0.90" stroke-linecap="square" stroke-linejoin="miter"><path transform="translate(998.00,17.00) scale(1.000)" d="M2,2.5 H8 M4.5,1 Q4,6 6.5,9 M7.5,4.5 Q5,8 3,8 Q1.5,7.5 3,6 Q6,4.5 8,6.5 Q9,8.5 6.5,9.5"/><path transform="translate(1008.00,17.00) scale(1.000)" d="M1.5,2 H8.5 L6,5 M5,4 Q5,8 2.5,9.5"/><path transform="translate(1018.00,17.00) scale(1.000)" d="M1,1 H9 M1,9.5 H9 M2.5,3 H7.5 V7.5 H2.5 Z M4,1 V9.5 M6,1 V9.5"/></g><g fill="none" stroke="#555" stroke-width="0.59" stroke-linecap="square" stroke-linejoin="miter"><path transform="translate(1047.00,14.35) scale(1.530)" d="M2,2.5 H8 M4.5,1 Q4,6 6.5,9 M7.5,4.5 Q5,8 3,8 Q1.5,7.5 3,6 Q6,4.5 8,6.5 Q9,8.5 6.5,9.5"/><path transform="translate(1062.30,14.35) scale(1.530)" d="M1.5,2 H8.5 L6,5 M5,4 Q5,8 2.5,9.5"/><path transform="translate(1077.60,14.35) scale(1.530)" d="M1,1 H9 M1,9.5 H9 M2.5,3 H7.5 V7.5 H2.5 Z M4,1 V9.5 M6,1 V9.5"/></g><rect x="1099.5" y="5.5" width="14" height="15" fill="#f6f6f6" stroke="#d4d4d4"/><path d="M1102,15 l4.5,-4 l4.5,4" stroke="#bbb" fill="none"/><rect x="1099.5" y="20.5" width="14" height="16" fill="#f6f6f6" stroke="#d4d4d4"/><path d="M1102,25 l4.5,4 l4.5,-4" stroke="#555" fill="none"/><circle cx="1138" cy="10.5" r="3.2" fill="none" stroke="#2f6fb8" stroke-width="1.4"/><path d="M1135.5,13 l-3,3.5" stroke="#2f6fb8" stroke-width="1.8"/><g fill="none" stroke="#444" stroke-width="1.14" stroke-linecap="square" stroke-linejoin="miter"><path transform="translate(1145.00,7.60) scale(0.880)" d="M2,1 V9.5 M0.5,3 H3.5 M2,4 L0.5,7 M2,4 L3.5,6 M6.5,0.5 L4,3.5 M6.5,0.5 L9.5,3.5 M5,4 H8.5 V6.5 H5 Z M4,8 H9.5 M6.7,4 V8 L4.5,9.5 M6.7,8 L9.5,9.5"/><path transform="translate(1154.50,7.60) scale(0.880)" d="M1,2 H9 M5,0.5 V3.5 M1.5,3.5 H8.5 V4.5 M3,5 L6,6 L3,7.5 H7.5 M5,7 V9.5 M3,8.5 L1.5,9.5 M7,8.5 L8.5,9.5"/></g><path d="M1172,11 h4 l-2,2z" fill="#555"/><text x="1130" y="28" font-size="7" fill="#555" font-family="Liberation Sans">a</text><text x="1134" y="27" font-size="7" fill="#8e4bb6" font-family="Liberation Sans">b</text><text x="1133" y="34" font-size="7" fill="#2f6fb8" font-family="Liberation Sans">ac</text><g fill="none" stroke="#444" stroke-width="1.14" stroke-linecap="square" stroke-linejoin="miter"><path transform="translate(1145.00,26.60) scale(0.880)" d="M1,1 H9 V3 H1 Z M3.7,1 V3 M6.3,1 V3 M1,4.5 H9 M5,3.5 V5 M2,5 V9.5 H9 M3.5,5.5 H7.5 V8.5 H3.5 M3.5,7 H7.5"/><path transform="translate(1154.50,26.60) scale(0.880)" d="M2,1 V9.5 L1,9 M0.5,3.5 H3.5 M0.5,7 L3.5,5.5 M5.5,0.5 L4.5,2 M5,2 H8 L7,3 M4.5,3.5 H9 V6.5 H4.5 Z M4,7.5 H9.5 M6.7,3.5 Q6.7,8 4.5,9.5 M6.7,7.5 L9.5,9.5"/></g><rect x="1248" y="0" width="192" height="25.5" fill="#53c400"/><rect x="1248" y="25.5" width="192" height="11" fill="#eeeeee"/><rect x="1248" y="25.5" width="192" height="1.5" fill="#fafafa"/><rect x="1248" y="30.5" width="192" height="1" fill="#cfcfcf"/></svg><div class="a" style="left:654px;top:36px;width:11px;height:1011px;background:linear-gradient(to right,rgba(0,0,0,0),rgba(0,0,0,0.03) 50%,rgba(0,0,0,0.11))"></div><div class="a" id="br" style="left:665px;top:36px;width:775px;height:1011px;background:#fff;border-left:1px solid #6a6a6a;border-top:1px solid #4d6080;overflow:hidden"><svg class="a" style="left:0;top:0" width="775" height="62"><rect x="0" y="0" width="775" height="34" fill="#dee1e6"/><rect x="0" y="34" width="775" height="28" fill="#fff"/><rect x="0" y="61.5" width="775" height="1" fill="#dadce0"/><path d="M-2,34 q8,0 8,-8 v-11 q0,-8 8,-8 h174 q8,0 8,8 v11 q0,8 8,8 z" fill="#fff"/><circle cx="22.3" cy="19.7" r="5.6" fill="#5f6368"/><path d="M18.2,18.2 q1.5,-3.5 5,-3.8 q-1.5,1.2 -1,2.2 q1.5,0.3 1.2,1.6 q-1.5,0.6 -2.6,0.2 q-1.2,-0.4 -2.6,-0.2z M20.5,21.5 q2.5,-0.8 3.5,0.5 q1,-1.5 3.2,-1.2 q-0.5,2.5 -3,4 q-1.5,0.6 -2.5,0.4 q1,-1.2 -0.2,-2 q-0.5,-0.4 -1,-1.7z" fill="#fff"/><text x="35.3" y="23.8" font-size="10.6" textLength="103.5" lengthAdjust="spacingAndGlyphs" fill="#3c4043" font-family="Liberation Sans">UML2.5-15 Activities.htm</text><path d="M180,17 l6,6 m0,-6 l-6,6" stroke="#3c4043" stroke-width="1.3"/><path d="M213.5,14.5 v9 m-4.5,-4.5 h9" stroke="#3c4043" stroke-width="1.3"/><path d="M24,48 h-10 m4,-4.5 l-4.5,4.5 l4.5,4.5" stroke="#bdc1c6" stroke-width="1.4" fill="none"/><path d="M37,48 h10 m-4,-4.5 l4.5,4.5 l-4.5,4.5" stroke="#bdc1c6" stroke-width="1.4" fill="none"/><path d="M72.5,46 a5,5 0 1 0 0.6,3.5" stroke="#5f6368" stroke-width="1.5" fill="none"/><path d="M70,42.5 h4.3 v4.3 z" fill="#5f6368"/><rect x="86" y="37" width="775" height="21.5" rx="10.75" fill="#f1f3f4"/><circle cx="100" cy="48" r="5.2" fill="none" stroke="#5f6368" stroke-width="1.2"/><rect x="99.4" y="46.5" width="1.2" height="4" fill="#5f6368"/><rect x="99.4" y="44.5" width="1.2" height="1.2" fill="#5f6368"/><g fill="none" stroke="#70757a" stroke-width="1.06" stroke-linecap="square" stroke-linejoin="miter"><path transform="translate(112.00,43.50) scale(0.900)" d="M1.5,2 H8.5 Q8,7 3,9.5"/><path transform="translate(119.60,43.50) scale(0.900)" d="M2,4 H8 L6,6 M5,5.5 Q5,8 3,9.5"/><path transform="translate(127.20,43.50) scale(0.900)" d="M8,1.5 L1.5,6.5 M5.5,4 V9.5"/><path transform="translate(134.80,43.50) scale(0.900)" d="M3,2 V6 Q3,8.5 1,9.5 M6,1.5 V9 L9,6.5"/></g><rect x="149.5" y="42" width="1" height="12" fill="#9aa0a6"/><text x="156.8" y="51.2" font-size="11.6" textLength="206" lengthAdjust="spacingAndGlyphs" fill="#303134" font-family="Liberation Sans">K:/Download/UML2.5-15%20Activities.htm</text></svg><div class="hd" style="left:9.00px;top:71.28px;font-size:23.3px;letter-spacing:0.000px;">15</div><div class="hd" style="left:60.30px;top:71.28px;font-size:23.3px;letter-spacing:0.015px;">Activities</div><div class="hd" style="left:8.00px;top:107.72px;font-size:17.7px;letter-spacing:0.000px;">15.1</div><div class="hd" style="left:74.00px;top:107.72px;font-size:17.7px;letter-spacing:0.298px;">Summary</div><div class="ln" style="left:7.7000000000000455px;top:131.99px;font-size:13.15px;color:#000;">An Activity is a kind of Behavior (see sub clause <span class="lk">13.2</span>) that is specified as a graph of <i>nodes</i> interconnected by <i>edges</i>. A subset of the nodes are <i>executable nodes</i></div><div class="ln" style="left:7.7000000000000455px;top:145.29px;font-size:13.15px;color:#000;">overall Activity. <i>Object nodes</i> hold data that is input to and output from executable nodes, and moves across <i>object flow</i> edges. <i>Control nodes</i> specify</div><div class="ln" style="left:7.7000000000000455px;top:158.59px;font-size:13.15px;color:#000;">edges. Activities are essentially what are commonly called “control and data flow” models. Such models of computation are inherently concurrent,</div><div class="ln" style="left:7.7000000000000455px;top:171.89px;font-size:13.15px;color:#000;">modeled explicitly by activity edges, and no ordering is mandated for any computation not explicitly sequenced.</div><div class="ln" style="left:7.7000000000000455px;top:194.99px;font-size:13.15px;color:#000;">Activities may describe procedural computation, forming hierarchies of Activities invoking other Activities, or, in an object-oriented model, they may</div><div class="ln" style="left:7.7000000000000455px;top:208.29px;font-size:13.15px;color:#000;">Operations that are directly invoked. Activities may be applied to organizational modeling for business process engineering and workflow. In this context</div><div class="ln" style="left:7.7000000000000455px;top:221.59px;font-size:13.15px;color:#000;">such as the finishing of a task, but also from outside the system, such as a customer call. Activities can also be used for information system modeling</div><div class="ln" style="left:7.7000000000000455px;top:245.29px;font-size:13.15px;color:#000;">The remainder of this clause describes how activity models are structured and various kinds of object and control nodes. The only kind of executable</div><div class="ln" style="left:7.7000000000000455px;top:258.59px;font-size:13.15px;color:#000;">described in Clause <span class="lk">16</span>. Actions are required for any significant capabilities of Activities. Actions invoke other Behaviors and Operations (see above)</div><div class="ln" style="left:7.7000000000000455px;top:271.89px;font-size:13.15px;color:#000;">together, and perform more advanced coordination of other Actions (Structured Actions). They are central to the “data flow” aspects of Activities, introducing</div><div class="ln" style="left:7.7000000000000455px;top:285.19px;font-size:13.15px;color:#000;">object flows to get and provide data to Actions. Most of the examples of Activity data flow appear in Clause <span class="lk">16</span>. The concrete syntax for Actions is a</div><div class="ln" style="left:7.7000000000000455px;top:298.49px;font-size:13.15px;color:#000;">notation only appears in Activity diagrams), and some concrete syntax for Actions is specified in this clause. This clause uses executable nodes to provide</div><div class="ln" style="left:7.7000000000000455px;top:311.79px;font-size:13.15px;color:#000;">be read in conjunction with Clause <span class="lk">16</span>.</div><div class="ln" style="left:7.7000000000000455px;top:404.49px;font-size:13.15px;color:#000;">An Activity is a Behavior specified as sequencing of subordinate units, using a control and data flow model. Subordinate behaviors coordinated by these</div><div class="ln" style="left:7.7000000000000455px;top:417.79px;font-size:13.15px;color:#000;">in the model finish executing, because objects and data become available or because events occur externally to the flow. The flow of execution is modeled</div><div class="ln" style="left:7.7000000000000455px;top:431.09px;font-size:13.15px;color:#000;">An ExecutableNode can be the execution of a subordinate behavior, such as an arithmetic computation, a call to an operation, or manipulation of object</div><div class="ln" style="left:7.7000000000000455px;top:444.39px;font-size:13.15px;color:#000;">ActivityNodes also include flow-of-control constructs, such as synchronization, decision, and concurrency control.</div><div class="ln" style="left:7.7000000000000455px;top:467.99px;font-size:13.15px;color:#000;">This sub clause describes the basic structure and flow semantics of an activity model as a graph of nodes and edges. Subsequent sub clauses then describe</div><div class="ln" style="left:7.7000000000000455px;top:481.29px;font-size:13.15px;color:#000;">Activity may contain and how those nodes may be grouped within the Activity.</div><div class="ln" style="left:7.7000000000000455px;top:969.49px;font-size:13.15px;color:#000;">The execution of one ActivityNode within an Activity may affect, and may be affected by, the execution of other ActivityNodes in the Activity. Such effects</div><div class="ln" style="left:7.7000000000000455px;top:982.79px;font-size:13.15px;color:#000;">interconnect the ActivityNodes. The effect of one ActivityNode on another is specified by the <i>flow of tokens</i> over the ActivityEdges between the ActivityNodes</div><div class="ln" style="left:7.7000000000000455px;top:1006.49px;font-size:13.15px;color:#000;">Tokens are not explicitly modeled in an Activity, but are used for describing the execution of an Activity. A token contains an object, datum, or locus</div><div class="hd" style="left:8.00px;top:348.86px;font-size:17.3px;letter-spacing:0.000px;">15.2</div><div class="hd" style="left:73.40px;top:348.86px;font-size:17.3px;letter-spacing:0.367px;">Activities</div><div class="hd" style="left:8.00px;top:380.06px;font-size:14.7px;letter-spacing:0.000px;">15.2.1</div><div class="hd" style="left:90.60px;top:380.06px;font-size:14.7px;letter-spacing:0.600px;">Summary</div><div class="hd" style="left:8.00px;top:495.56px;font-size:14.7px;letter-spacing:0.000px;">15.2.2</div><div class="hd" style="left:90.60px;top:495.56px;font-size:14.7px;letter-spacing:0.469px;">Abstract Syntax</div><div class="hd" style="left:7.30px;top:882.80px;font-size:11.7px;letter-spacing:0.006px;">Figure 15.1  Activities</div><div class="hd" style="left:8.00px;top:917.72px;font-size:15.1px;letter-spacing:0.000px;">15.2.3</div><div class="hd" style="left:90.70px;top:917.72px;font-size:15.1px;letter-spacing:0.241px;">Semantics</div><div class="hd" style="left:8.00px;top:944.20px;font-size:12.4px;letter-spacing:0.000px;">15.2.3.1</div><div class="hd" style="left:90.70px;top:944.20px;font-size:12.4px;letter-spacing:0.265px;">Activities</div><svg class="a" style="left:-666px;top:-37px" width="1440" height="1047"><g class="brd" transform="translate(647.3,-38.8) scale(1.042)"><rect class="bx" x="290.1" y="569.3" width="46.70" height="13.10"/><text class="nbi" x="313.45" y="578.90" text-anchor="middle">Behavior</text><rect class="bx" x="426.4" y="570" width="88.00" height="13.20"/><text class="nbi" x="470.40" y="579.60" text-anchor="middle">ConnectableElement</text><rect class="bx" x="538.1" y="570" width="82.60" height="13.20"/><text class="nbi" x="579.40" y="579.60" text-anchor="middle">MultiplicityElement</text><rect class="bx" x="254.7" y="621.8" width="119.00" height="29.60"/><line class="ln" x1="254.7" y1="634.3" x2="373.7" y2="634.3"/><text class="nb" x="314.20" y="631.05" text-anchor="middle">Activity</text><text class="at" x="259" y="642.0">+ isReadOnly : Boolean = false</text><text class="at" x="259" y="650.0">+ isSingleExecution : Boolean = false</text><rect class="bx" x="560.3" y="625.4" width="42.90" height="20.80"/><line class="ln" x1="560.3" y1="638.5" x2="603.2" y2="638.5"/><text class="nb" x="581.75" y="634.95" text-anchor="middle">Variable</text><rect class="bx" x="142.5" y="663.1" width="86.00" height="13.20"/><text class="nbi" x="185.50" y="672.70" text-anchor="middle">RedefinableElement</text><rect class="bx" x="426.3" y="667.1" width="86.40" height="13.10"/><text class="nbi" x="469.50" y="676.70" text-anchor="middle">RedefinableElement</text><rect class="bx" x="153.3" y="711.9" width="68.00" height="50.20"/><line class="ln" x1="153.3" y1="724.4" x2="221.3" y2="724.4"/><text class="nbi" x="187.30" y="721.15" text-anchor="middle">ActivityNode</text><rect class="bx" x="437.7" y="711.9" width="70.80" height="91.30"/><line class="ln" x1="437.7" y1="724.4" x2="508.5" y2="724.4"/><text class="nbi" x="473.10" y="721.15" text-anchor="middle">ActivityEdge</text><rect class="bx" x="146.3" y="771.3" width="86.40" height="34.70"/><text class="nbi" x="189.50" y="781.20" text-anchor="middle">ValueSpecification</text><rect class="bx" x="146" y="846" width="86.70" height="31.60"/><text class="nbi" x="189.35" y="856.80" text-anchor="middle">Behavior</text><rect class="bx" x="366.6" y="846" width="107.60" height="30.20"/><line class="ln" x1="366.6" y1="858.5" x2="474.2" y2="858.5"/><text class="nb" x="420.40" y="855.25" text-anchor="middle">ObjectFlow</text><text class="at" x="370" y="867.2">+ isMulticast : Boolean = false</text><text class="at" x="370" y="875.2">+ isMultireceive : Boolean = false</text><rect class="bx" x="496.9" y="849.6" width="55.60" height="20.90"/><line class="ln" x1="496.9" y1="862.7" x2="552.5" y2="862.7"/><text class="nb" x="524.70" y="859.15" text-anchor="middle">ControlFlow</text><line class="ln" x1="313.40" y1="589.40" x2="313.40" y2="621.80"/><polygon class="tri" points="313.40,582.40 309.55,589.40 317.25,589.40"/><line class="ln dl" x1="498.62" y1="586.42" x2="574.00" y2="625.40"/><polygon class="tri" points="492.40,583.20 496.85,589.84 500.39,583.00"/><line class="ln" x1="579.80" y1="590.20" x2="579.80" y2="625.40"/><polygon class="tri" points="579.80,583.20 575.95,590.20 583.65,590.20"/><line class="ln dl" x1="186.25" y1="683.30" x2="186.25" y2="711.90"/><polygon class="tri" points="186.25,676.30 182.40,683.30 190.10,683.30"/><line class="ln dl" x1="469.60" y1="687.20" x2="469.60" y2="711.90"/><polygon class="tri" points="469.60,680.20 465.75,687.20 473.45,687.20"/><line class="ln" x1="471.80" y1="810.20" x2="471.80" y2="829.80"/><polygon class="tri" points="471.80,803.20 467.95,810.20 475.65,810.20"/><polyline class="ar dl" points="419.7,846 419.7,829.8 523.8,829.8 523.8,849.6"/><line class="ln dl" x1="375.50" y1="636.10" x2="560.30" y2="636.10"/><polygon class="dm" points="376.50,636.10 383.25,639.70 390.00,636.10 383.25,632.50"/><circle cx="375.50" cy="636.10" r="2.2" class="dt"/><circle cx="559.50" cy="636.10" r="2.2" class="dt"/><line class="ln" x1="272.00" y1="652.50" x2="217.50" y2="711.90"/><polygon class="dm" points="272.00,652.50 264.61,655.22 262.54,662.82 269.92,660.09"/><circle cx="272.00" cy="652.50" r="2.2" class="dt"/><circle cx="218.50" cy="711.90" r="2.2" class="dt"/><line class="ln" x1="359.50" y1="653.00" x2="437.70" y2="711.90"/><polygon class="dm" points="359.50,653.00 362.93,660.09 370.68,661.42 367.26,654.34"/><circle cx="359.50" cy="653.00" r="2.2" class="dt"/><circle cx="437.20" cy="711.60" r="2.2" class="dt"/><line class="ln" x1="221.30" y1="725.60" x2="437.70" y2="725.60"/><circle cx="223.00" cy="725.60" r="2.2" class="dt"/><circle cx="436.50" cy="725.60" r="2.2" class="dt"/><line class="ln dl" x1="221.30" y1="752.10" x2="437.70" y2="752.10"/><circle cx="223.00" cy="752.10" r="2.2" class="dt"/><circle cx="436.50" cy="752.10" r="2.2" class="dt"/><line class="ln" x1="232.70" y1="778.40" x2="437.70" y2="778.40"/><polyline class="ar" points="239.50,782.00 233.50,778.40 239.50,774.80"/><circle cx="234.50" cy="778.40" r="2.2" class="dt"/><polygon class="dm" points="437.70,778.40 431.20,774.80 424.70,778.40 431.20,782.00"/><line class="ln" x1="232.70" y1="801.10" x2="437.70" y2="801.10"/><polyline class="ar" points="239.50,804.70 233.50,801.10 239.50,797.50"/><circle cx="234.50" cy="801.10" r="2.2" class="dt"/><polygon class="dm" points="437.70,801.10 431.20,797.50 424.70,801.10 431.20,804.70"/><line class="ln dl" x1="232.70" y1="847.80" x2="366.60" y2="847.80"/><polyline class="ar" points="239.50,851.40 233.50,847.80 239.50,844.20"/><circle cx="234.50" cy="847.80" r="2.2" class="dt"/><line class="ln dl" x1="232.70" y1="874.40" x2="366.60" y2="874.40"/><polyline class="ar" points="239.50,878.00 233.50,874.40 239.50,870.80"/><circle cx="234.50" cy="874.40" r="2.2" class="dt"/><polyline class="ar dl" points="153.3,717.3 92.1,717.3 92.1,759 153.3,759"/><polyline class="ar" points="146.50,755.40 152.50,759.00 146.50,762.60"/><circle cx="151.50" cy="759.00" r="2.2" class="dt"/><polyline class="ar dl" points="508.5,740 570.6,740 570.6,774 508.5,774"/><polyline class="ar" points="515.30,777.60 509.30,774.00 515.30,770.40"/><circle cx="510.30" cy="774.00" r="2.2" class="dt"/><text class="t" x="380" y="625">{subsets namespace}</text><text class="t" x="392.5" y="634">+ activityScope</text><text class="t" x="394" y="645">0..1</text><text class="t" x="472.6" y="625">{subsets ownedMember}</text><text class="t" x="519" y="634">+ variable</text><text class="st" x="545.0" y="645.5">*</text><text class="t" x="244.5" y="662">0..1</text><text class="t" x="267" y="667">+ activity</text><text class="t" x="256" y="676">{subsets owner}</text><text class="t" x="374" y="658">0..1</text><text class="t" x="331" y="667">+ activity</text><text class="t" x="325" y="677">{subsets owner}</text><text class="t" x="88.3" y="697">+ activityNode</text><text class="t" x="75" y="707">{subsets redefinedElement}</text><text class="st" x="216.5" y="702.5">*</text><text class="t" x="237.5" y="697">{subsets ownedElement}</text><text class="t" x="230" y="707">+ node</text><text class="t" x="329.6" y="700">{subsets ownedElement}</text><text class="st" x="429.0" y="703.5">*</text><text class="t" x="400" y="709">+ edge</text><text class="t" x="230" y="722">+ target</text><text class="t" x="230" y="733">1</text><text class="t" x="392.5" y="722">+ incoming</text><text class="st" x="427.0" y="735.5">*</text><text class="t" x="517" y="722">{subsets redefinableElement}</text><text class="t" x="511" y="733">+ activityEdge</text><text class="st" x="118.5" y="728.5">*</text><text class="st" x="120.5" y="757.5">*</text><text class="t" x="230" y="748">+ source</text><text class="t" x="230" y="759">1</text><text class="t" x="393" y="748">+ outgoing</text><text class="st" x="427.0" y="761.5">*</text><text class="st" x="544.0" y="750.5">*</text><text class="st" x="544.0" y="769.5">*</text><text class="t" x="244" y="766">{subsets ownedElement}</text><text class="t" x="253" y="775">+ guard</text><text class="t" x="363" y="766">{subsets owner}</text><text class="t" x="370" y="775">+ activityEdge</text><text class="t" x="88.3" y="772">+ redefinedNode</text><text class="t" x="40" y="782">{subsets redefinableElement}</text><text class="t" x="245" y="788">0..1</text><text class="t" x="402" y="788">0..1</text><text class="t" x="245" y="799">0..1</text><text class="t" x="402" y="799">0..1</text><text class="t" x="515" y="786">+ redefinedEdge</text><text class="t" x="514" y="797">{subsets redefinedElement}</text><text class="t" x="248.6" y="808">+ weight</text><text class="t" x="370" y="808">+ activityEdge</text><text class="t" x="244.7" y="817">{subsets ownedElement}</text><text class="t" x="363" y="817">{subsets owner}</text><text class="t" x="245" y="841">+ transformation</text><text class="t" x="318.8" y="841">+ objectFlow</text><text class="t" x="245" y="859">0..1</text><text class="st" x="356.0" y="857.5">*</text><text class="t" x="245" y="870">0..1</text><text class="st" x="356.0" y="868.5">*</text><text class="t" x="245" y="887">+ selection</text><text class="t" x="315" y="887">+ objectFlow</text></g></svg></div></body></html>
